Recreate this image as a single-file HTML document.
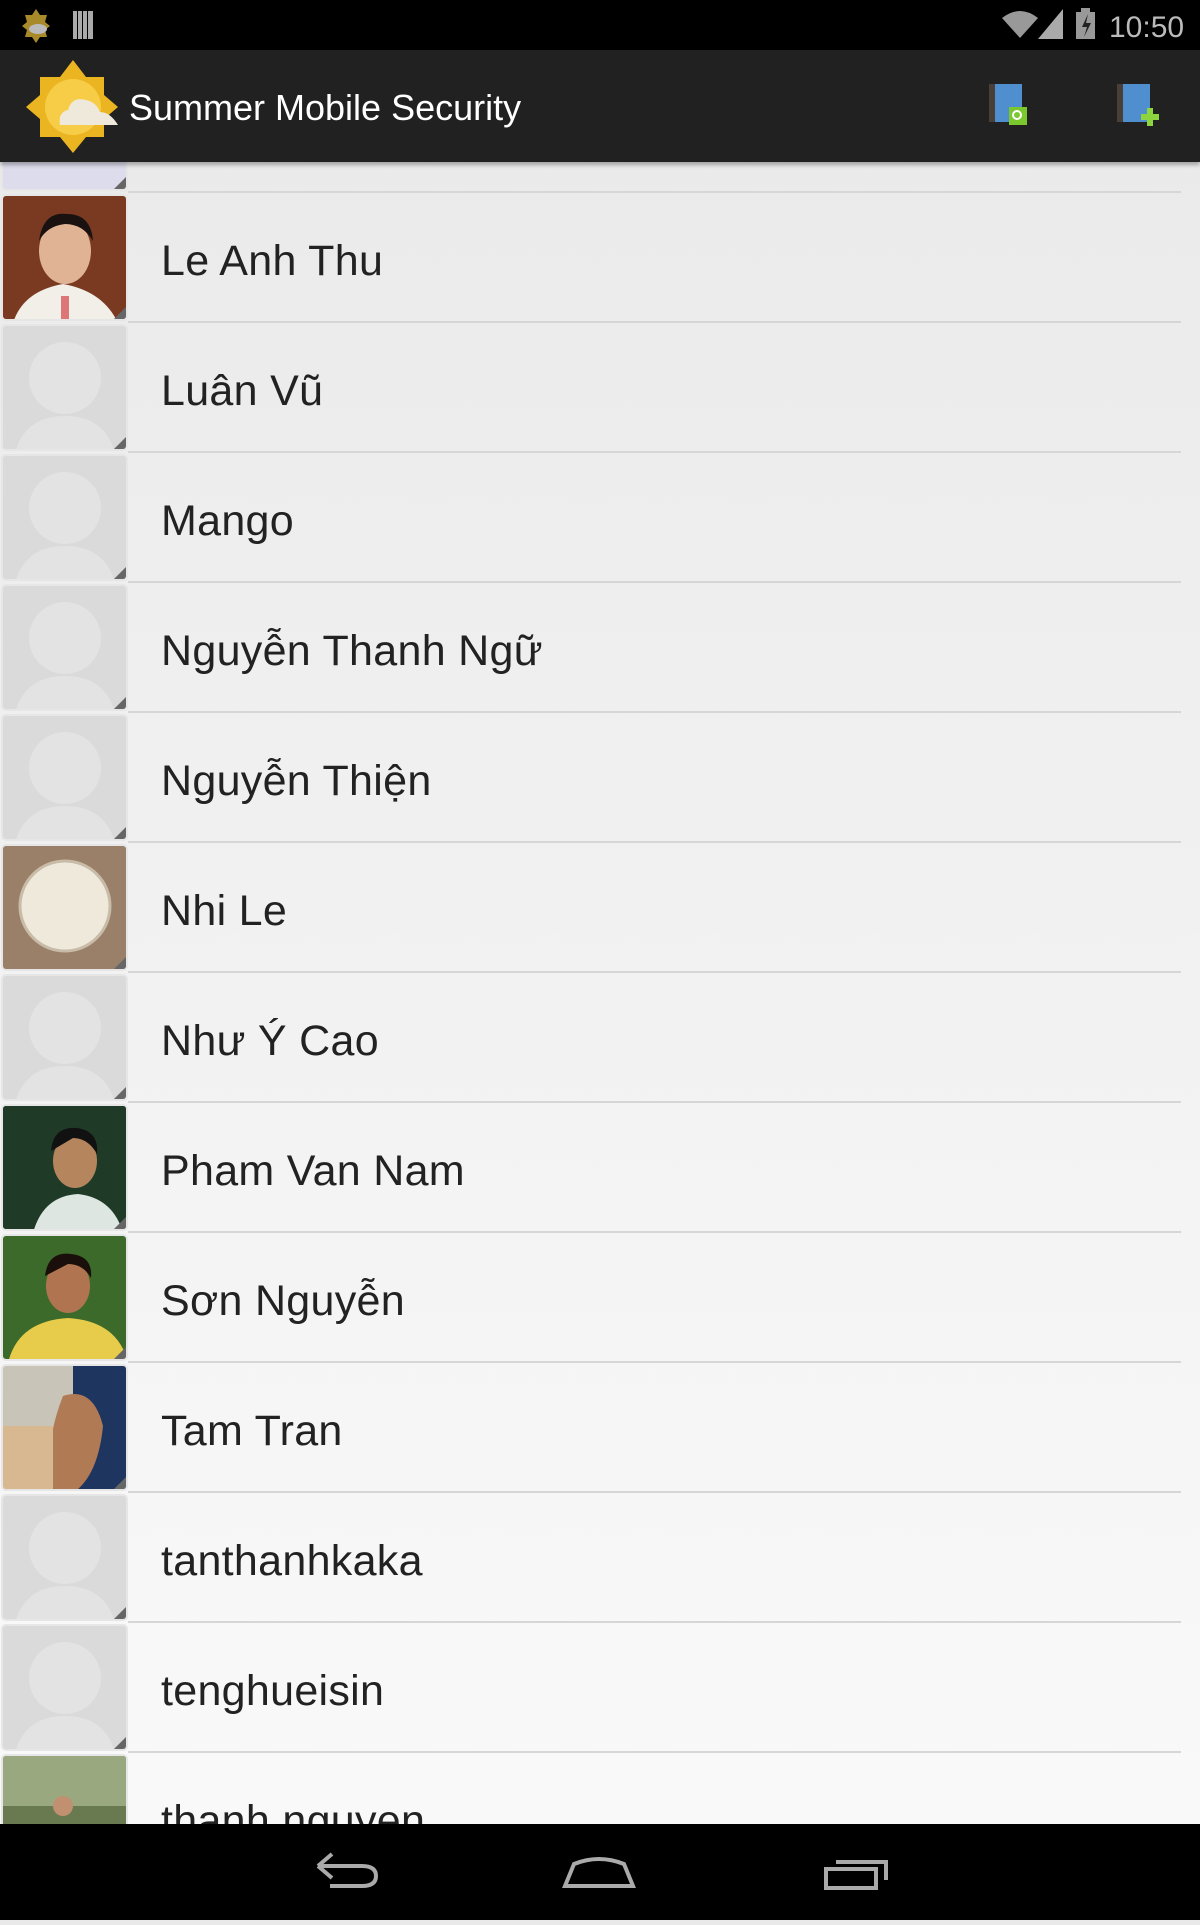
<!DOCTYPE html>
<html><head><meta charset="utf-8"><style>
*{margin:0;padding:0;box-sizing:border-box}
body{width:1200px;height:1920px;overflow:hidden;position:relative;font-family:"Liberation Sans","Noto Sans CJK SC",sans-serif;background:linear-gradient(#e9e9e9,#f9f9f9 1800px)}
#sb{position:absolute;left:0;top:0;width:1200px;height:50px;background:#000}
#ab{position:absolute;left:0;top:50px;width:1200px;height:112px;background:#212121;box-shadow:0 3px 4px rgba(0,0,0,.3);z-index:5}
.row{position:absolute;left:0;width:1200px;height:130px}
.row .line{position:absolute;left:128px;width:1053px;bottom:0;height:2px;background:#d6d6d6}
.av{position:absolute;left:1px;top:1px;width:127px;height:127px;border:2px solid #e6e6e6;border-radius:5px;background:#dadada;overflow:hidden}
.av:after{content:"";position:absolute;right:0;bottom:0;border-style:solid;border-width:0 0 12px 12px;border-color:transparent transparent #666 transparent}
.name{position:absolute;left:161px;top:44px;font-size:43px;color:#222;font-weight:300;letter-spacing:.3px}
#nb{position:absolute;left:0;top:1824px;width:1200px;height:96px;background:#000;z-index:6}
</style></head><body>
<div id="sb">
<svg width="1200" height="50" style="position:absolute;left:0;top:0">
<polygon points="36,9 40,15 47,15 45,22 50,26 45,30 47,37 40,37 36,43 32,37 25,37 27,30 22,26 27,22 25,15 32,15" fill="#a88a2a"/>
<ellipse cx="38" cy="29" rx="9" ry="5" fill="#bbb"/>
<rect x="73" y="11" width="4" height="28" fill="#aaa"/><rect x="78" y="11" width="4" height="28" fill="#aaa"/><rect x="83" y="11" width="4" height="28" fill="#aaa"/><rect x="88" y="11" width="5" height="28" fill="#aaa"/>
<path d="M1002 18 Q1020 4 1038 18 L1020 38 Z" fill="#999"/>
<polygon points="1038,39 1063,9 1063,39" fill="#aaa"/>
<rect x="1076" y="12" width="19" height="27" fill="#999"/><rect x="1081" y="8" width="9" height="4" fill="#999"/>
<polygon points="1088,14 1082,27 1087,27 1084,37 1091,23 1086,23" fill="#222"/>
<text x="1109" y="37" font-size="30" fill="#bbb" font-family="Liberation Sans">10:50</text>
</svg></div>
<div id="ab">
<svg width="1200" height="112" style="position:absolute;left:0;top:0">
<polygon points="73,10 86,27 104,27 104,45 118,57 104,69 104,87 86,87 73,103 60,87 40,87 40,69 26,57 40,45 40,27 60,27" fill="#eab521"/>
<circle cx="73" cy="57" r="28" fill="#f7cc46"/>
<path d="M60 75 Q58 62 68 60 Q72 46 86 50 Q96 52 100 62 Q110 62 118 75 Z" fill="#efe9dc"/>
<text x="129" y="70" font-size="36" fill="#fff" font-family="Liberation Sans">Summer Mobile Security</text>
<rect x="989" y="34" width="33" height="38" fill="#4f8fcf"/><rect x="989" y="34" width="6" height="38" fill="#4a3f38"/>
<rect x="1009" y="57" width="18" height="18" fill="#7bc82e"/><circle cx="1017" cy="65" r="4" fill="none" stroke="#fff" stroke-width="2"/>
<rect x="1117" y="34" width="33" height="38" fill="#4f8fcf"/><rect x="1117" y="34" width="6" height="38" fill="#4a3f38"/>
<path d="M1147 58 v6 h-6 v6 h6 v6 h6 v-6 h6 v-6 h-6 v-6 z" fill="#8ed43e"/>
</svg></div>

<div class="row" style="top:63px"><div class="av" style="background:#dcdcec"></div><div class="line"></div></div>

<div class="row" style="top:193px"><div class="av" style="background:#7a3a22"><svg width="127" height="127"><ellipse cx="62" cy="55" rx="26" ry="33" fill="#e0b394"/><path d="M36 45 Q40 15 64 18 Q88 18 90 45 Q80 28 62 28 Q44 30 36 45Z" fill="#1a1210"/><path d="M10 127 Q20 95 60 88 Q100 95 115 127Z" fill="#f2eee8"/><rect x="58" y="100" width="8" height="27" fill="#d77"/></svg></div><div class="name">Le Anh Thu</div><div class="line"></div></div>

<div class="row" style="top:323px"><div class="av"><svg width="127" height="127"><circle cx="62" cy="52" r="36" fill="#e3e3e3"/><path d="M12 127 Q22 90 62 90 Q102 90 112 127Z" fill="#e3e3e3"/></svg></div><div class="name">Luân Vũ</div><div class="line"></div></div>

<div class="row" style="top:453px"><div class="av"><svg width="127" height="127"><circle cx="62" cy="52" r="36" fill="#e3e3e3"/><path d="M12 127 Q22 90 62 90 Q102 90 112 127Z" fill="#e3e3e3"/></svg></div><div class="name">Mango</div><div class="line"></div></div>

<div class="row" style="top:583px"><div class="av"><svg width="127" height="127"><circle cx="62" cy="52" r="36" fill="#e3e3e3"/><path d="M12 127 Q22 90 62 90 Q102 90 112 127Z" fill="#e3e3e3"/></svg></div><div class="name">Nguyễn Thanh Ngữ</div><div class="line"></div></div>

<div class="row" style="top:713px"><div class="av"><svg width="127" height="127"><circle cx="62" cy="52" r="36" fill="#e3e3e3"/><path d="M12 127 Q22 90 62 90 Q102 90 112 127Z" fill="#e3e3e3"/></svg></div><div class="name">Nguyễn Thiện</div><div class="line"></div></div>

<div class="row" style="top:843px"><div class="av" style="background:#9a8068"><svg width="127" height="127"><circle cx="62" cy="60" r="45" fill="#efe9dc"/><circle cx="62" cy="60" r="45" fill="none" stroke="#c8bca8" stroke-width="3"/></svg></div><div class="name">Nhi Le</div><div class="line"></div></div>

<div class="row" style="top:973px"><div class="av"><svg width="127" height="127"><circle cx="62" cy="52" r="36" fill="#e3e3e3"/><path d="M12 127 Q22 90 62 90 Q102 90 112 127Z" fill="#e3e3e3"/></svg></div><div class="name">Như Ý Cao</div><div class="line"></div></div>

<div class="row" style="top:1103px"><div class="av" style="background:#1e2a20"><svg width="127" height="127"><rect x="0" y="0" width="127" height="127" fill="#203a28"/><ellipse cx="72" cy="55" rx="22" ry="27" fill="#b5855e"/><path d="M48 45 Q50 20 74 22 Q96 25 94 48 Q85 32 70 32Z" fill="#111"/><path d="M30 127 Q40 90 75 88 Q110 92 120 127Z" fill="#dde6e0"/></svg></div><div class="name">Pham Van Nam</div><div class="line"></div></div>

<div class="row" style="top:1233px"><div class="av" style="background:#3b6a2a"><svg width="127" height="127"><ellipse cx="65" cy="50" rx="22" ry="27" fill="#b07550"/><path d="M42 40 Q45 15 68 18 Q90 20 88 42 Q80 28 65 28Z" fill="#1a0f0a"/><path d="M5 127 Q15 85 65 82 Q115 85 125 127Z" fill="#e6cc4a"/></svg></div><div class="name">Sơn Nguyễn</div><div class="line"></div></div>

<div class="row" style="top:1363px"><div class="av" style="background:#c9c4b8"><svg width="127" height="127"><rect x="70" y="0" width="57" height="127" fill="#1e3560"/><path d="M60 30 Q90 20 100 60 Q95 110 70 127 L50 127 Q40 80 60 30Z" fill="#b07a55"/><rect x="0" y="60" width="50" height="67" fill="#d8b890"/></svg></div><div class="name">Tam Tran</div><div class="line"></div></div>

<div class="row" style="top:1493px"><div class="av"><svg width="127" height="127"><circle cx="62" cy="52" r="36" fill="#e3e3e3"/><path d="M12 127 Q22 90 62 90 Q102 90 112 127Z" fill="#e3e3e3"/></svg></div><div class="name">tanthanhkaka</div><div class="line"></div></div>

<div class="row" style="top:1623px"><div class="av"><svg width="127" height="127"><circle cx="62" cy="52" r="36" fill="#e3e3e3"/><path d="M12 127 Q22 90 62 90 Q102 90 112 127Z" fill="#e3e3e3"/></svg></div><div class="name">tenghueisin</div><div class="line"></div></div>

<div class="row" style="top:1753px"><div class="av" style="background:#6a7a50"><svg width="127" height="127"><rect width="127" height="50" fill="#9aa880"/><circle cx="60" cy="50" r="10" fill="#c09070"/><path d="M40 90 Q60 60 80 90Z" fill="#eee"/></svg></div><div class="name">thanh nguyen</div><div class="line"></div></div>

<div id="nb"><svg width="1200" height="96">
<path d="M318 42 L332 30 M318 42 L332 54 M318 42 H362 Q376 42 376 52 Q376 62 362 62 H330" stroke="#aaa" stroke-width="4" fill="none"/>
<path d="M565 62 L574 40 Q599 30 624 40 L633 62 Z" stroke="#aaa" stroke-width="4" fill="none"/>
<rect x="826" y="45" width="50" height="19" stroke="#aaa" stroke-width="4" fill="none"/>
<path d="M836 38 H886 V56" stroke="#aaa" stroke-width="4" fill="none"/>
</svg></div>
</body></html>
